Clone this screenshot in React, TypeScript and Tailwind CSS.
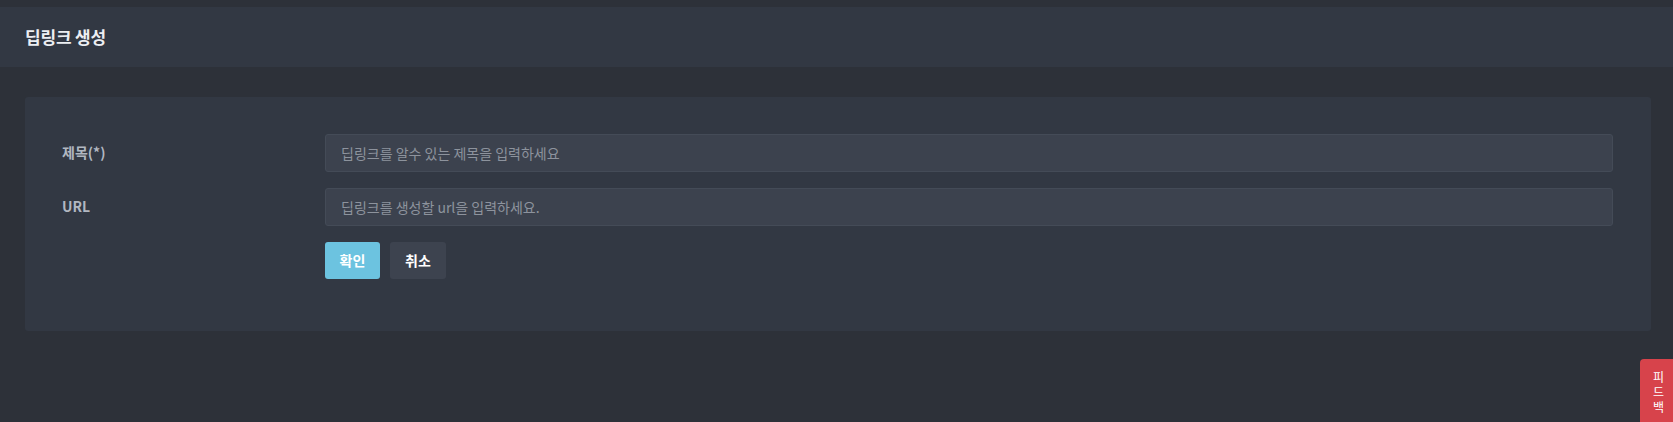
export default function App() {
  return (
    <div
      className="min-h-[422px] w-full bg-[#2d3139] pt-[7px] text-white relative overflow-hidden"
      style={{ fontFamily: '"Noto Sans CJK KR", "Noto Sans", sans-serif' }}
    >
      <div className="h-[60px] bg-[#323843] flex items-center px-[25px]">
        <h1 className="text-[17px] font-bold text-[#eceef2] tracking-[-0.2px]">딥링크 생성</h1>
      </div>

      <div className="pt-[30px] pl-[25px] pr-[22px]">
        <div className="bg-[#323843] rounded-[3px] pt-[37px] pb-[52px] pl-[37px] pr-[38px]">
          <div className="flex items-center">
            <label className="w-[263px] text-[14px] font-bold text-[#b1b7c1] -mt-[2px]">제목(*)</label>
            <input
              className="flex-1 h-[38px] bg-[#3c424e] border border-[#444b57] rounded-[3px] px-[15px] text-[14px] text-[#c9ced6] placeholder:text-[#8d939d] outline-none"
              placeholder="딥링크를 알수 있는 제목을 입력하세요"
            />
          </div>
          <div className="flex items-center mt-[16px]">
            <label className="w-[263px] text-[14px] font-bold text-[#b1b7c1] -mt-[2px]">URL</label>
            <input
              className="flex-1 h-[38px] bg-[#3c424e] border border-[#444b57] rounded-[3px] px-[15px] text-[14px] text-[#c9ced6] placeholder:text-[#8d939d] outline-none"
              placeholder="딥링크를 생성할 url을 입력하세요."
            />
          </div>
          <div className="flex gap-[10px] mt-[16px] pl-[263px]">
            <button className="w-[55px] h-[37px] rounded-[3px] bg-[#6cc3e0] text-[14px] font-bold text-white">
              확인
            </button>
            <button className="w-[56px] h-[37px] rounded-[3px] bg-[#3d434f] text-[14px] font-bold text-white">
              취소
            </button>
          </div>
        </div>
      </div>

      <div className="absolute left-[1640px] top-[359px] w-[40px] h-[80px] bg-[#d7434b] rounded-tl-[4px] pl-[13px] pt-[10px] flex flex-col text-[12px] leading-[15px] text-white">
        <span>피</span>
        <span>드</span>
        <span>백</span>
      </div>
    </div>
  );
}
